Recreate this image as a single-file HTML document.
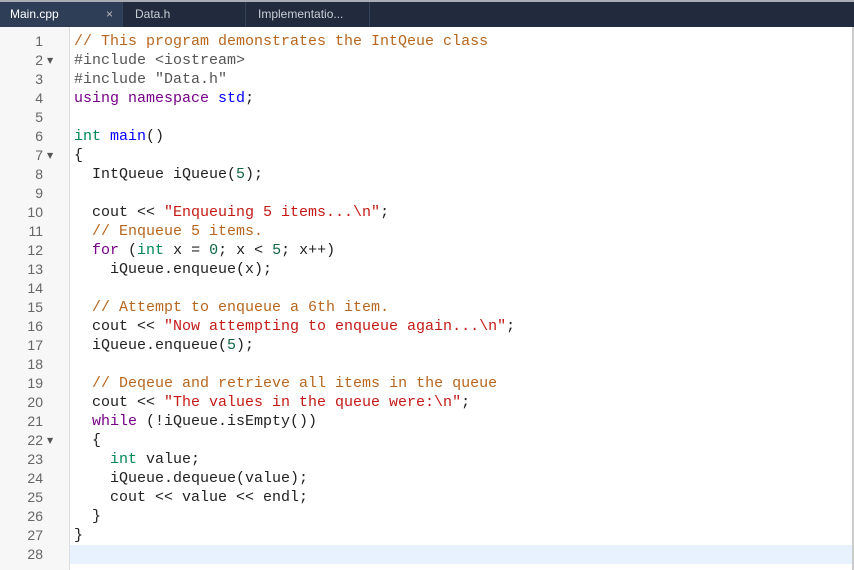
<!DOCTYPE html>
<html><head><style>
body{margin:0;width:854px;height:570px;overflow:hidden;background:#fff;position:relative;font-family:"Liberation Sans",sans-serif}
.top{position:absolute;left:0;top:0;width:854px;height:2px;background:#a9adb5}
.bar{position:absolute;left:0;top:2px;width:854px;height:25px;background:#212b3d}
.tab{position:absolute;top:2px;height:25px;line-height:25px;font-size:12px;color:#c9ced6;box-sizing:border-box;border-right:1px solid #34425a;padding-left:12px}
.gut{position:absolute;left:0;top:27px;width:69px;height:543px;background:#f7f7f7;border-right:1px solid #ddd}
.code{position:absolute;left:0;top:32px;font-family:"Liberation Mono",monospace;font-size:15px;line-height:19px;white-space:pre;color:#222}
.ln{position:absolute;left:0;width:43px;text-align:right;color:#666;font-family:"Liberation Sans",sans-serif;font-size:14px}
.ar{position:absolute;left:47px;font-size:8px;color:#555;font-family:"DejaVu Sans",sans-serif}
.cl{position:absolute;left:74px}
.c{color:#b8661e}.k{color:#770088}.t{color:#008855}.s{color:#c41a16}.n{color:#116644}.p{color:#555}.d{color:#0000ff}
.act{position:absolute;left:70px;top:545px;width:782px;height:19px;background:#e8f2fe}
.rb{position:absolute;right:0;top:27px;width:2px;height:543px;background:#ccc}
</style></head><body>
<div class="top"></div><div class="bar"></div>
<div class="tab" style="left:0;width:123px;background:#2f3e57;color:#fff;padding-left:10px">Main.cpp<span style="position:absolute;left:106px;color:#bbb">×</span></div>
<div class="tab" style="left:123px;width:123px">Data.h</div>
<div class="tab" style="left:246px;width:124px">Implementatio...</div>
<div class="gut"></div><div class="act"></div><div class="rb"></div>
<div class="code" id="c"></div>
<script>
var L=[
'<span class="c">// This program demonstrates the IntQeue class</span>',
'<span class="p">#include &lt;iostream&gt;</span>',
'<span class="p">#include "Data.h"</span>',
'<span class="k">using namespace</span> <span class="d">std</span>;',
'',
'<span class="t">int</span> <span class="d">main</span>()',
'{',
'  IntQueue iQueue(<span class="n">5</span>);',
'',
'  cout &lt;&lt; <span class="s">"Enqueuing 5 items...\\n"</span>;',
'  <span class="c">// Enqueue 5 items.</span>',
'  <span class="k">for</span> (<span class="t">int</span> x = <span class="n">0</span>; x &lt; <span class="n">5</span>; x++)',
'    iQueue.enqueue(x);',
'',
'  <span class="c">// Attempt to enqueue a 6th item.</span>',
'  cout &lt;&lt; <span class="s">"Now attempting to enqueue again...\\n"</span>;',
'  iQueue.enqueue(<span class="n">5</span>);',
'',
'  <span class="c">// Deqeue and retrieve all items in the queue</span>',
'  cout &lt;&lt; <span class="s">"The values in the queue were:\\n"</span>;',
'  <span class="k">while</span> (!iQueue.isEmpty())',
'  {',
'    <span class="t">int</span> value;',
'    iQueue.dequeue(value);',
'    cout &lt;&lt; value &lt;&lt; endl;',
'  }',
'}',
''];
var h='',folds={2:1,7:1,22:1};
for(var i=0;i<L.length;i++){var y=i*19;
h+='<div class="ln" style="top:'+y+'px">'+(i+1)+'</div>';
if(folds[i+1])h+='<div class="ar" style="top:'+y+'px">▼</div>';
h+='<div class="cl" style="top:'+y+'px">'+L[i]+'</div>';}
document.getElementById('c').innerHTML=h;
</script>
</body></html>
